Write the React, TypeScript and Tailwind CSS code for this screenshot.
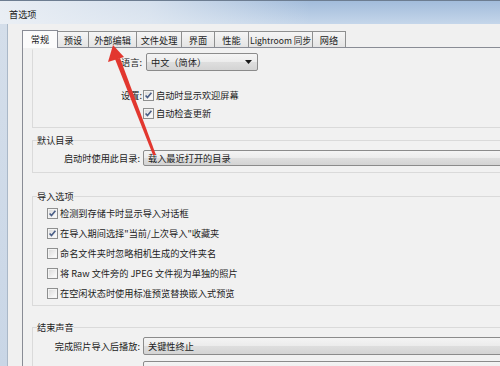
import React from 'react';

const font = "font-['Noto_Sans_CJK_SC','Noto_Sans',sans-serif] text-[9.2px] text-[#1c1c1c]";

const tabs = [
  { label: '常规', w: 'w-[36px]', active: true },
  { label: '预设', w: 'w-[32px]' },
  { label: '外部编辑', w: 'w-[49px]' },
  { label: '文件处理', w: 'w-[46px]' },
  { label: '界面', w: 'w-[34px]' },
  { label: '性能', w: 'w-[35px]' },
  { label: 'Lightroom 同步', w: 'w-[65px]', small: true },
  { label: '网络', w: 'w-[34px]' },
];

function CheckBox({ checked }: { checked?: boolean }) {
  return (
    <svg width="11" height="11" viewBox="0 0 11 11" className="shrink-0">
      <defs>
        <linearGradient id="cb" x1="0" y1="0" x2="1" y2="1">
          <stop offset="0" stopColor="#dcdcdc" />
          <stop offset="1" stopColor="#fbfbfb" />
        </linearGradient>
      </defs>
      <rect x="0.5" y="0.5" width="10" height="10" fill="#f4f4f4" stroke="#8e8f8f" />
      <rect x="2" y="2" width="7" height="7" fill="url(#cb)" />
      {checked && (
        <path d="M2.6 5.4 L4.5 7.6 L8.4 2.8" fill="none" stroke="#4b5f87" strokeWidth="1.6" />
      )}
    </svg>
  );
}

function Select({ text, className }: { text: string; className: string }) {
  return (
    <div
      className={`flex items-center shrink-0 rounded-[2px] border border-[#8b8b8b] bg-[linear-gradient(#f4f4f4_0%,#ececec_48%,#dedede_52%,#d4d4d4_100%)] pl-[4px] pr-[5px] ${className}`}
    >
      <span className="flex-1 leading-[12px] whitespace-nowrap">{text}</span>
      <svg width="7" height="4" viewBox="0 0 7 4">
        <path d="M0 0 H7 L3.5 4 Z" fill="#1a1a1a" />
      </svg>
    </div>
  );
}

function Row({ label, checked, text }: { label?: string; checked?: boolean; text: string }) {
  return (
    <div className="flex items-center h-[18px]">
      <span className="w-[109px] text-right leading-[12px]">{label}</span>
      <div className="ml-[1px] flex items-center gap-[2px]">
        <CheckBox checked={checked} />
        <span className="leading-[12px]">{text}</span>
      </div>
    </div>
  );
}

function ImportRow({ checked, text }: { checked?: boolean; text: string }) {
  return (
    <div className="flex items-center h-[20px] pl-[14px] gap-[2px]">
      <CheckBox checked={checked} />
      <span className="leading-[12px] whitespace-nowrap">{text}</span>
    </div>
  );
}

export default function App() {
  return (
    <div className={`relative w-[500px] h-[366px] overflow-hidden bg-[#f0f0f0] ${font}`}>
      {/* title bar */}
      <div className="h-[24px] border-t border-[#6d7d91] bg-[linear-gradient(90deg,rgba(236,240,245,0.95)_0%,rgba(230,236,243,0.75)_30%,rgba(230,236,243,0)_62%),linear-gradient(#a2bcdb,#c5d6ea)] pl-[9px] pt-[7px]">
        <span className="leading-[12px] text-[#202020]">首选项</span>
      </div>

      <div className="flex h-[342px]">
        <div className="w-[8px] shrink-0 border-r border-[#aab8c8] bg-[linear-gradient(#d4deea,#c9d6e6)]" />

        <div className="flex-1 pl-[14px] pt-[6px]">
          {/* tabs */}
          <div className="flex items-end">
            {tabs.map((t, i) =>
              t.active ? (
                <div
                  key={t.label}
                  className={`${t.w} relative z-10 h-[18px] -mb-px flex items-center justify-center border border-b-0 border-[#898c95] bg-[#fbfbfb] pb-[1px]`}
                >
                  <span className="leading-[12px] whitespace-nowrap">{t.label}</span>
                </div>
              ) : (
                <div
                  key={t.label}
                  className={`${t.w} ${i > 0 ? '-ml-px' : ''} h-[16px] flex items-center justify-center border border-b-0 border-[#8e8f8f] bg-[linear-gradient(#f5f5f5,#e4e4e4)]`}
                >
                  <span className={`leading-[12px] whitespace-nowrap ${t.small ? 'text-[8.6px]' : ''}`}>{t.label}</span>
                </div>
              )
            )}
          </div>

          {/* panel */}
          <div className="border-l border-t border-[#898c95] bg-[#f1f1f1] pl-[9px] pt-px h-[330px]">
            <fieldset className="border border-t-transparent border-[#dadada] w-[600px] mt-0 pb-[5px]">
              <div className="flex items-center h-[18px] mt-[3px]">
                <span className="w-[109px] text-right leading-[12px]">语言:</span>
                <Select text="中文（简体）" className="ml-[4px] w-[112px] h-[18px]" />
              </div>
              <div className="mt-[15px]">
                <Row label="设置:" checked text="启动时显示欢迎屏幕" />
                <Row checked text="自动检查更新" />
              </div>
            </fieldset>

            <fieldset className="border border-[#dadada] w-[600px] mt-[4px] pb-[6px]">
              <legend className="ml-[4px] leading-[16px]">默认目录</legend>
              <div className="flex items-center mt-[2px]">
                <span className="w-[107px] text-right leading-[12px]">启动时使用此目录:</span>
                <Select text="载入最近打开的目录" className="ml-[3px] w-[420px] h-[16px]" />
              </div>
            </fieldset>

            <fieldset className="border border-[#dadada] w-[600px] mt-[16px] pb-[2px]">
              <legend className="ml-[4px] leading-[14px]">导入选项</legend>
              <ImportRow checked text="检测到存储卡时显示导入对话框" />
              <ImportRow checked text={'在导入期间选择"当前/上次导入"收藏夹'} />
              <ImportRow text="命名文件夹时忽略相机生成的文件夹名" />
              <ImportRow text="将 Raw 文件旁的 JPEG 文件视为单独的照片" />
              <ImportRow text="在空闲状态时使用标准预览替换嵌入式预览" />
            </fieldset>

            <fieldset className="border border-[#dadada] w-[600px] mt-[14px] pb-[4px]">
              <legend className="ml-[4px] leading-[14px]">结束声音</legend>
              <div className="flex items-center mt-[3px]">
                <span className="w-[107px] text-right leading-[12px]">完成照片导入后播放:</span>
                <Select text="关键性终止" className="ml-[3px] w-[420px] h-[18px]" />
              </div>
              <div className="flex items-center mt-[6px]">
                <span className="w-[107px]" />
                <Select text="" className="ml-[3px] w-[420px] h-[18px]" />
              </div>
            </fieldset>
          </div>
        </div>
      </div>

      {/* red annotation arrow */}
      <svg className="pointer-events-none absolute left-0 top-0" width="500" height="366" viewBox="0 0 500 366">
        <polygon points="113,45 108,62 124,57" fill="#e2372f" />
        <polygon points="115,59 120,58 156,155 153,155" fill="#e2372f" />
      </svg>
    </div>
  );
}
